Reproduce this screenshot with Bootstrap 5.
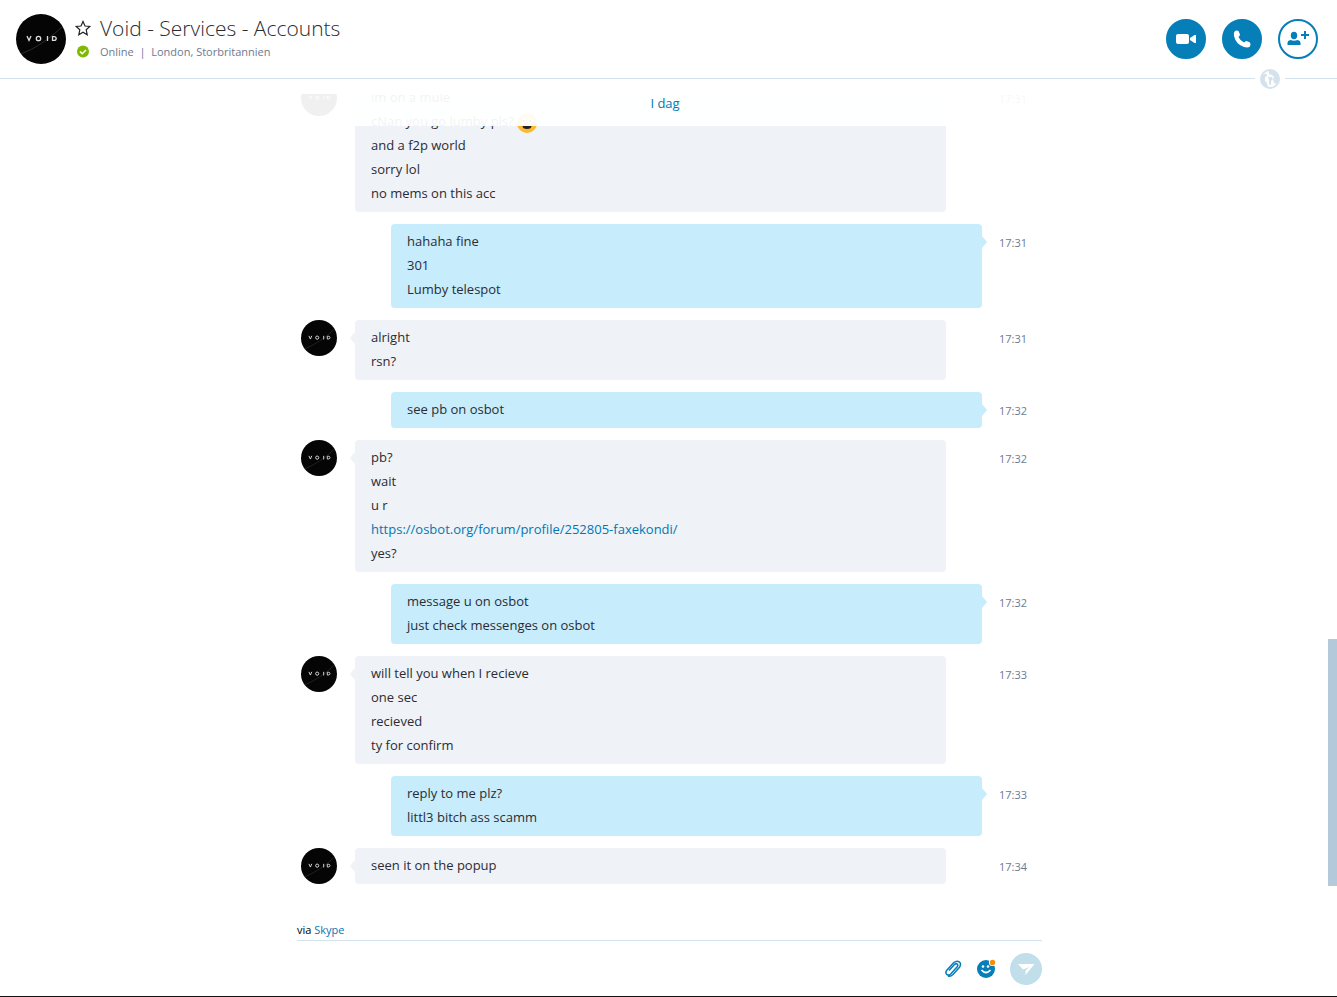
<!DOCTYPE html>
<html lang="sv">
<head>
<meta charset="utf-8">
<meta name="viewport" content="width=device-width, initial-scale=1">
<title>Void - Services - Accounts</title>
<link href="https://cdn.jsdelivr.net/npm/bootstrap@5.3.0/dist/css/bootstrap.min.css" rel="stylesheet">
<style>
body{font-family:"Open Sans","Noto Sans",sans-serif;font-size:13px;line-height:24px;color:#2b2c33;background:#fff}
a{color:#0078b4;text-decoration:none}
.app{border-bottom:1px solid #111}
.topbar{height:78px;padding:0 19px 0 16px}
.rule{height:1px;background:#d3e3ed}
.divider{height:1px}
.divider .rule-end{width:52px}
.logo{width:50px;height:50px}
.title{font-weight:300;font-size:21px;line-height:28px}
.status{font-size:11px;line-height:16px;margin:2px 0 4px;color:#6e7991}
.round{width:40px;height:40px;border:2px solid #067eb7;background:#067eb7;color:#fff}
.round.hollow{background:#fff;color:#067eb7}
.shell{padding-left:2px}
main{margin-top:15px}
.column{width:100%;max-width:745px}
.thread{gap:12px;padding:0 15px 12px 4px}
.face{width:36px;height:36px}
.bubble{position:relative;border-radius:4px;padding:5px 16px 7px;background:#eff2f7}
.theirs .bubble{margin-left:18px;margin-right:36px}
.mine .bubble{margin-left:90px;background:#c7ecfc}
.bubble::before{content:"";position:absolute;top:12px;border:6px solid transparent}
.theirs .bubble::before{right:100%;border-width:6px 5px 6px 0;border-right-color:#eff2f7}
.mine .bubble::before{left:100%;border-width:6px 0 6px 5px;border-left-color:#c7ecfc}
.smiley{vertical-align:-3px;margin:-4px 0}
.stamp{width:45px;font-size:11px;padding-top:7px;color:#6e7991}
.day{top:0;height:32px;padding-right:9px;background:rgba(255,255,255,.94);line-height:18px}
.thumb{right:0;width:9px;bottom:10px;height:247px;background:#b4cadb}
.via{font-size:11px;line-height:16px;margin-top:26px;padding-bottom:2px;border-bottom:1px solid #d3e3ed;color:#000}
.tools{height:55px;gap:14px}
.send{width:32px;height:32px;background:#c0dfeb}
</style>
</head>
<body>
<svg class="d-none" xmlns="http://www.w3.org/2000/svg">
<symbol id="void" viewBox="0 0 50 50"><circle cx="25" cy="25" r="25" fill="#050505"/><path d="M5 40Q26 32 46 13" stroke="#2c2c2c" fill="none"/><g fill="none" stroke="#ddd" stroke-width="1.3"><path d="M11 22l2 4.500 2-4.500M31.500 22v5M36.500 22.600v3.800h1.500q2.200 0 2.200-1.900t-2.200-1.900z"/><circle cx="22.500" cy="24.500" r="2.200"/></g></symbol>
</svg>
<div class="app vh-100 d-flex flex-column overflow-hidden">
<header>
<div class="topbar d-flex align-items-center justify-content-between">
<div class="d-flex align-items-center">
<svg class="logo"><use href="#void"/></svg>
<div class="ms-2">
<div class="d-flex align-items-center gap-2"><button class="btn p-0 border-0 d-flex" aria-label="Favorit"><svg width="18" height="18" viewBox="0 0 18 18"><path d="M9 2.500l2 4.500 4.800.5-3.600 3.300 1 4.900L9 13.200l-4.200 2.500 1-4.900L2.200 7.500 7 7z" fill="none" stroke="#222" stroke-width="1.200"/></svg></button><h1 class="title mb-0">Void - Services - Accounts</h1></div>
<div class="status d-flex align-items-center gap-2"><svg width="18" height="14" viewBox="0 0 18 14"><circle cx="9" cy="6.500" r="6" fill="#7fba00"/><path d="M6 6.500l2.200 2.200L12 5" fill="none" stroke="#fff" stroke-width="1.600"/></svg><span>Online&nbsp; |&nbsp; London, Storbritannien</span></div>
</div>
</div>
<div class="d-flex gap-3">
<button class="btn round rounded-circle p-0 d-flex align-items-center justify-content-center" aria-label="Video"><svg width="20" height="12" viewBox="0 0 20 12" fill="currentColor"><rect y="1" width="13" height="10" rx="2"/><path d="M14 5l4.500-3H20v8h-1.500L14 7z"/></svg></button>
<button class="btn round rounded-circle p-0 d-flex align-items-center justify-content-center" aria-label="Ring"><svg width="18" height="18" viewBox="0 0 18 18" fill="currentColor"><path d="M2 1Q4 0 5.500 1L7 4.500Q7 5.500 5.500 7 7 10.500 11 12.500 12.500 10.800 13.500 11L17 12.500Q18 14 17 16.500 15 18 11 17 3 14.500 1 6 .3 2.500 2 1z"/></svg></button>
<button class="btn round hollow rounded-circle p-0 d-flex align-items-center justify-content-center" aria-label="Bjud in"><svg width="22" height="16" viewBox="0 0 22 16" fill="currentColor"><ellipse cx="7" cy="4.500" rx="3.200" ry="3.700"/><path d="M.5 14v-2q0-2.500 3-3 3.500 1.500 7 0 3 .5 3 3v2zM17 0h2v3h3v2h-3v3h-2V5h-3V3h3z"/></svg></button>
</div>
</div>
<div class="divider d-flex align-items-center">
<span class="rule flex-grow-1"></span>
<svg class="mx-1" width="22" height="20" viewBox="0 0 22 20"><circle cx="11" cy="10" r="9" fill="#fff" stroke="#d5e2ec" stroke-width="2"/><path d="M10 2q4-1 7 2l3 5-1 4-3 2-2-4 1-3-2-2-3-1zM3 7l4-3 1 3-2 1v4l2 2 1 4-4-1-3-5zM9 8h4l1 2-2 2v3l-1 2-1-3V11z" fill="#d5e2ec"/></svg>
<span class="rule rule-end"></span>
</div>
</header>
<main class="shell position-relative flex-grow-1 overflow-hidden d-flex justify-content-center">
<div class="column position-relative d-flex flex-column justify-content-end">
<div class="thread d-flex flex-column">
<div class="theirs d-flex"><svg class="face"><use href="#void"/></svg><div class="bubble flex-grow-1">im on a mule<br>cNan you go lumby pls? <svg class="smiley" width="20" height="20" viewBox="0 0 20 20"><circle cx="10" cy="10" r="10" fill="#fdb92b"/><path d="M5.500 13h9q0 3-4.500 3t-4.500-3z" fill="#222"/><circle cx="7" cy="8" r="2" fill="#fff"/><circle cx="13" cy="8" r="2" fill="#fff"/><circle cx="7" cy="8" r="1"/><circle cx="13" cy="8" r="1"/></svg><br>and a f2p world<br>sorry lol<br>no mems on this acc</div><time class="stamp text-end">17:31</time></div>
<div class="mine d-flex"><div class="bubble flex-grow-1">hahaha fine<br>301<br>Lumby telespot</div><time class="stamp text-end">17:31</time></div>
<div class="theirs d-flex"><svg class="face"><use href="#void"/></svg><div class="bubble flex-grow-1">alright<br>rsn?</div><time class="stamp text-end">17:31</time></div>
<div class="mine d-flex"><div class="bubble flex-grow-1">see pb on osbot</div><time class="stamp text-end">17:32</time></div>
<div class="theirs d-flex"><svg class="face"><use href="#void"/></svg><div class="bubble flex-grow-1">pb?<br>wait<br>u r<br><a href="https://osbot.org/forum/profile/252805-faxekondi/">https://osbot.org/forum/profile/252805-faxekondi/</a><br>yes?</div><time class="stamp text-end">17:32</time></div>
<div class="mine d-flex"><div class="bubble flex-grow-1">message u on osbot<br>just check messenges on osbot</div><time class="stamp text-end">17:32</time></div>
<div class="theirs d-flex"><svg class="face"><use href="#void"/></svg><div class="bubble flex-grow-1">will tell you when I recieve<br>one sec<br>recieved<br>ty for confirm</div><time class="stamp text-end">17:33</time></div>
<div class="mine d-flex"><div class="bubble flex-grow-1">reply to me plz?<br>littl3 bitch ass scamm</div><time class="stamp text-end">17:33</time></div>
<div class="theirs d-flex"><svg class="face"><use href="#void"/></svg><div class="bubble flex-grow-1">seen it on the popup</div><time class="stamp text-end">17:34</time></div>
</div>
<div class="day position-absolute w-100 text-center"><a href="#">I dag</a></div>
</div>
<div class="thumb position-absolute"></div>
</main>
<footer class="shell d-flex justify-content-center">
<div class="column">
<div class="via">via <a href="#">Skype</a></div>
<div class="tools d-flex align-items-center justify-content-end">
<button class="btn p-0 border-0 d-flex" aria-label="Bifoga"><svg width="18" height="20" viewBox="0 0 18 20"><path d="M5 11.500l5.500-6q1.500-1.500 2.700-.4t0 2.700l-6.500 7.200q-2 2-3.900.4t0-4.200l7-7.700q3-2.300 5.400-.7t.5 5.200l-6.700 7.500q-2.500 2.500-5 1.500" fill="none" stroke="#067eb7" stroke-width="1.500"/></svg></button>
<button class="btn p-0 border-0 d-flex" aria-label="Emoji"><svg width="20" height="20" viewBox="0 0 20 20"><circle cx="10" cy="10" r="9" fill="#067eb7"/><circle cx="7" cy="7.500" r="1.300" fill="#fff"/><circle cx="12" cy="7.500" r="1.300" fill="#fff"/><path d="M5.500 11q4.500 5 9 0" fill="none" stroke="#fff" stroke-width="1.800"/><circle cx="16.500" cy="3.500" r="3.600" fill="#fff"/><circle cx="16.500" cy="3.500" r="2.700" fill="#ff8c00"/></svg></button>
<button class="btn send rounded-circle border-0 p-0 d-flex align-items-center justify-content-center" aria-label="Skicka"><svg width="18" height="14" viewBox="0 0 18 14"><path d="M1 2h16.500L8.500 13V8.500l4-3.500L6 7.500z" fill="#fff"/></svg></button>
</div>
</div>
</footer>
</div>
<script src="https://cdn.jsdelivr.net/npm/bootstrap@5.3.0/dist/js/bootstrap.bundle.min.js"></script>
</body>
</html>
